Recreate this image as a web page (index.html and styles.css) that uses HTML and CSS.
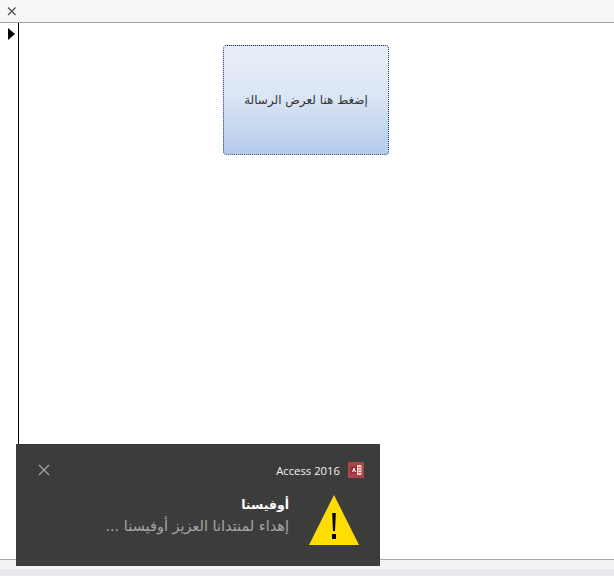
FILE: index.html
```html
<!DOCTYPE html>
<html lang="ar">
<head>
    <meta charset="UTF-8">
    <meta name="viewport" content="width=device-width, initial-scale=1.0">
    <title>Access 2016</title>
    <link rel="stylesheet" href="styles.css">
</head>
<body>
    <div class="topbar">
        <svg class="close-doc" width="10" height="10" viewBox="0 0 10 10"><path d="M1 1.5 L8.5 9 M8.5 1.5 L1 9" stroke="#555" stroke-width="1.4" fill="none"/></svg>
    </div>
    <div class="form-area">
        <div class="selector">
            <svg width="7" height="12" viewBox="0 0 7 12"><path d="M0 0 L7 6 L0 12 Z" fill="#000"/></svg>
        </div>
        <div class="detail">
            <button class="msg-btn" dir="rtl">إضغط هنا لعرض الرسالة</button>
        </div>
    </div>
    <div class="statusbar"></div>
    <div class="statusbar-low"></div>

    <div class="toast">
        <div class="toast-head">
            <svg class="toast-close" width="12" height="12" viewBox="0 0 12 12"><path d="M1 1 L11 11 M11 1 L1 11" stroke="#a8a8a8" stroke-width="1.1" fill="none"/></svg>
            <div class="toast-app">
                <span>Access 2016</span>
                <svg width="16" height="16" viewBox="0 0 16 16">
                    <rect width="16" height="16" fill="#a8474a"/>
                    <rect x="2.5" y="4.5" width="7" height="7" rx="1" fill="#8f2f32"/>
                    <rect x="9" y="3" width="4.5" height="10" rx="1" fill="#f0d8d8"/>
                    <path d="M10 5.5 H13 M10 8 H13 M10 10.5 H13" stroke="#a8474a" stroke-width="0.8" fill="none"/>
                    <path d="M4.4 10 L6 6 L7.6 10 M5 8.8 H7" stroke="#fff" stroke-width="0.9" fill="none"/>
                </svg>
            </div>
        </div>
        <div class="toast-body">
            <div class="toast-text" dir="rtl">
                <div class="toast-title">أوفيسنا</div>
                <div class="toast-msg">إهداء لمنتدانا العزيز أوفيسنا ...</div>
            </div>
            <svg class="warn" width="50" height="50" viewBox="0 0 50 50">
                <path d="M25 0 L50 50 L0 50 Z" fill="#ffdd00"/>
                <path d="M23.2 18 H26.8 L26 36 H24 Z" fill="#000"/>
                <rect x="23" y="39" width="4" height="5" fill="#000"/>
            </svg>
        </div>
    </div>
</body>
</html>
```

FILE: styles.css
```css
body {
    margin: 0;
    display: flex;
    flex-direction: column;
    height: 576px;
    overflow: hidden;
    position: relative;
    background: #fff;
    font-family: "DejaVu Sans", sans-serif;
}
.topbar {
    height: 22px;
    flex: none;
    background: #f7f7f7;
    border-bottom: 1px solid #a0a0a0;
    display: flex;
    align-items: center;
    padding-left: 7px;
}
.form-area {
    flex: 1;
    display: flex;
    min-height: 0;
}
.selector {
    width: 10px;
    flex: none;
    border-right: 1px solid #000;
    padding: 2px 0 0 8px;
}
.detail {
    flex: 1;
    display: flex;
    align-items: flex-start;
    padding: 22px 0 0 204px;
}
.msg-btn {
    width: 166px;
    height: 110px;
    padding: 0;
    border: 1px dotted #1f3f70;
    border-radius: 4px;
    background: linear-gradient(#e9eff9, #dce6f5 45%, #b4cbec);
    color: #333;
    font-family: "DejaVu Sans", sans-serif;
    font-size: 12px;
}
.statusbar {
    height: 9px;
    flex: none;
    background: #f2f3f5;
    border-top: 1px solid #a8a8a8;
}
.statusbar-low {
    height: 7px;
    flex: none;
    background: #e8e9ec;
}
.toast {
    position: absolute;
    left: 16px;
    top: 444px;
    width: 364px;
    height: 122px;
    box-sizing: border-box;
    background: #3c3c3c;
    padding: 18px 16px 0 22px;
}
.toast-head {
    display: flex;
    justify-content: space-between;
    align-items: center;
    height: 16px;
}
.toast-app {
    display: flex;
    align-items: center;
    gap: 8px;
    color: #f2f2f2;
    font-family: "Open Sans", sans-serif;
    font-size: 11.3px;
}
.toast-body {
    display: flex;
    justify-content: flex-end;
    gap: 20px;
    margin-top: 17px;
    margin-right: 5px;
}
.toast-title {
    color: #fff;
    font-weight: bold;
    font-size: 12.5px;
    line-height: 20px;
}
.toast-msg {
    color: #a6a6a6;
    font-size: 14.5px;
    line-height: 22px;
}
```
